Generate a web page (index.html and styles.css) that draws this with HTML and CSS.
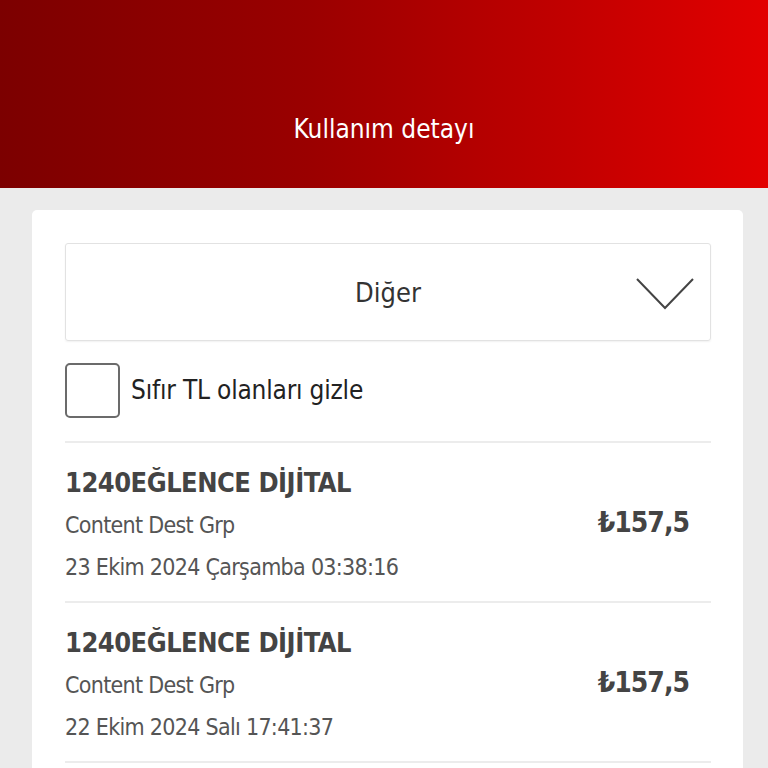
FILE: index.html
```html
<!DOCTYPE html>
<html lang="tr">
<head>
<meta charset="utf-8">
<link rel="stylesheet" href="styles.css">
</head>
<body>
<header class="top">
  <h1 class="title">Kullanım detayı</h1>
</header>
<main class="page">
  <section class="card">
    <div class="select">
      <span class="select-text">Diğer</span>
      <svg class="chev" width="58" height="32" viewBox="0 0 58 32"><path d="M1 1 L29 30 L57 1" fill="none" stroke="#444" stroke-width="2"/></svg>
    </div>
    <label class="check">
      <span class="box"></span>
      <span class="check-text">Sıfır TL olanları gizle</span>
    </label>
    <ul class="list">
      <li class="item">
        <div class="info">
          <div class="name">1240EĞLENCE DİJİTAL</div>
          <div class="sub">Content Dest Grp</div>
          <div class="sub date">23 Ekim 2024 Çarşamba 03:38:16</div>
        </div>
        <div class="price">₺157,5</div>
      </li>
      <li class="item">
        <div class="info">
          <div class="name">1240EĞLENCE DİJİTAL</div>
          <div class="sub">Content Dest Grp</div>
          <div class="sub date">22 Ekim 2024 Salı 17:41:37</div>
        </div>
        <div class="price">₺157,5</div>
      </li>
    </ul>
  </section>
</main>
</body>
</html>
```
FILE: styles.css
```css
* { box-sizing: border-box; }
html, body { margin: 0; padding: 0; }
body {
  background: #ebebeb;
  font-family: "DejaVu Sans Condensed", "Liberation Sans", sans-serif;
  color: #333;
  height: 768px;
  overflow: hidden;
}
.top {
  height: 188px;
  background: linear-gradient(to right, #7c0000 0%, #9a0000 40%, #c30000 75%, #e20000 100%);
  display: flex;
  align-items: flex-end;
  justify-content: center;
  padding-bottom: 44px;
}
.title {
  margin: 0;
  color: #fff;
  font-weight: normal;
  font-size: 26px;
  line-height: 30px;
}
.page { padding: 22px 25px 0 32px; }
.card {
  background: #fff;
  border-radius: 5px;
  padding: 33px 32px 0 33px;
  min-height: 600px;
}
.select {
  height: 98px;
  border: 1px solid #e2e2e2;
  border-radius: 3px;
  box-shadow: 0 1px 2px rgba(0,0,0,0.06);
  display: flex;
  align-items: center;
  justify-content: center;
  position: relative;
}
.select-text { font-size: 27px; color: #333; }
.chev { position: absolute; right: 16px; top: 34px; }
.check {
  display: flex;
  align-items: center;
  gap: 11px;
  margin-top: 21px;
  height: 56px;
}
.box {
  width: 55px;
  height: 55px;
  border: 2px solid #6b6b6b;
  border-radius: 5px;
}
.check-text { font-size: 26px; color: #222; letter-spacing: -0.2px; }
.list { list-style: none; margin: 23px 0 0; padding: 0; border-top: 2px solid #ececec; }
.item {
  display: flex;
  align-items: flex-start;
  justify-content: space-between;
  height: 160px;
  border-bottom: 2px solid #ececec;
  padding: 20px 22px 0 0;
}
.info { display: flex; flex-direction: column; }
.name { font-weight: bold; font-size: 27px; color: #444; line-height: 40px; letter-spacing: -0.5px; }
.sub { font-size: 23px; color: #555; line-height: 45px; letter-spacing: -0.7px; }
.sub.date { line-height: 38px; }
.price { font-weight: bold; font-size: 28px; color: #444; line-height: 40px; margin-top: 40px; letter-spacing: -1px; }
```
